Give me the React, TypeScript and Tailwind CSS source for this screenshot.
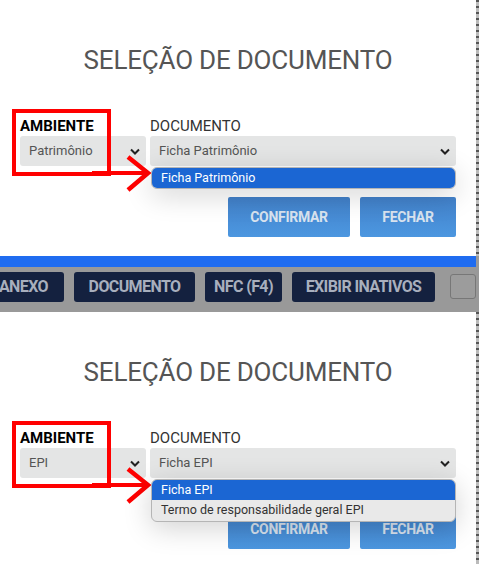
import React from 'react'

const font = { fontFamily: 'Roboto, "Noto Sans", sans-serif' }

function Chevron() {
  return (
    <svg width="10" height="7" viewBox="0 0 10 7" className="shrink-0">
      <path d="M1 1.5 L5 5.5 L9 1.5" fill="none" stroke="#222" strokeWidth="2" />
    </svg>
  )
}

function Select({ value }: { value: string }) {
  return (
    <div className="h-[30px] bg-[#e4e5e5] rounded-[3px] flex items-center justify-between pl-[9px] pr-[6px]">
      <span className="text-[13px] text-[#555]">{value}</span>
      <Chevron />
    </div>
  )
}

function Annotation() {
  return (
    <>
      {/* red box */}
      <div className="absolute left-[12px] top-[109px] w-[99px] h-[67px] border-[4px] border-[#ff0000] pointer-events-none" />
      {/* arrow */}
      <svg className="absolute left-[90px] top-[154px] pointer-events-none" width="62" height="42" viewBox="0 0 62 42">
        <path d="M2 19 L57 19" stroke="#ff0000" strokeWidth="4" fill="none" />
        <path d="M38 3 L58 19 L38 36" stroke="#ff0000" strokeWidth="4.5" fill="none" strokeLinejoin="miter" />
      </svg>
    </>
  )
}

function Panel({
  ambiente,
  documento,
  options,
}: {
  ambiente: string
  documento: string
  options: string[]
}) {
  return (
    <div className="relative bg-white pt-[44px] px-[20px]">
      <h1 className="text-center text-[26px] leading-[32px] text-[#555] tracking-[-0.2px]">SELEÇÃO DE DOCUMENTO</h1>
      <div className="grid grid-cols-[126px_1fr] gap-x-[4px] mt-[41px]">
        <div className="text-[15px] leading-[18px] font-bold text-black">AMBIENTE</div>
        <div className="text-[15px] leading-[18px] text-[#333]">DOCUMENTO</div>
        <div className="mt-[1px]">
          <Select value={ambiente} />
        </div>
        <div className="mt-[1px] relative">
          <Select value={documento} />
          <div className="absolute left-[1px] right-0 top-[31px] z-10 rounded-[6px] overflow-hidden bg-[#e9e9e9] border border-[#b5b5b5] shadow-[0_6px_28px_rgba(0,0,0,0.18)]">
            {options.map((o, i) => (
              <div
                key={o}
                className={
                  i === 0
                    ? 'h-[20px] flex items-center pl-[9px] text-[12.5px] text-white bg-[#1b66d3]'
                    : 'h-[21px] flex items-center pl-[9px] text-[12.5px] text-[#333]'
                }
              >
                {o}
              </div>
            ))}
          </div>
        </div>
      </div>
      <div className="flex justify-end gap-[10px] mt-[31px] pb-[19px]">
        <button className="w-[122px] h-[40px] rounded-[2px] bg-gradient-to-b from-[#4281ca] to-[#4c97e0] text-[#d9e3ef] text-[14px] font-bold tracking-[-0.3px]">
          CONFIRMAR
        </button>
        <button className="w-[96px] h-[40px] rounded-[2px] bg-gradient-to-b from-[#4281ca] to-[#4c97e0] text-[#d9e3ef] text-[14px] font-bold tracking-[-0.3px]">
          FECHAR
        </button>
      </div>
      <Annotation />
    </div>
  )
}

function ToolButton({ label, className }: { label: string; className: string }) {
  return (
    <div
      className={
        'h-[30px] bg-[#14213f] rounded-[3px] flex items-center text-[16px] font-bold text-[#a8afbd] tracking-[-0.6px] ' +
        className
      }
    >
      {label}
    </div>
  )
}

export default function App() {
  return (
    <div className="w-[479px] h-[564px] overflow-hidden flex bg-white" style={font}>
      <div className="flex-1 flex flex-col">
        <div className="h-[256px] overflow-hidden">
          <Panel ambiente="Patrimônio" documento="Ficha Patrimônio" options={['Ficha Patrimônio']} />
        </div>
        <div className="h-[11px] bg-[#1f6cf0]" />
        <div className="h-[45px] bg-[#999] flex items-center gap-[10px] -ml-[10px] pb-[6px]">
          <ToolButton label="ANEXO" className="w-[74px] justify-end pr-[16px]" />
          <ToolButton label="DOCUMENTO" className="w-[121px] justify-center" />
          <ToolButton label="NFC (F4)" className="w-[77px] justify-center" />
          <ToolButton label="EXIBIR INATIVOS" className="w-[143px] justify-center" />
          <div className="ml-[5px] w-[26px] h-[25px] rounded-[3px] border border-[#777] bg-[#9c9c9c]" />
        </div>
        <div className="flex-1 overflow-hidden">
          <Panel
            ambiente="EPI"
            documento="Ficha EPI"
            options={['Ficha EPI', 'Termo de responsabilidade geral EPI']}
          />
        </div>
      </div>
      <div className="w-[3px] flex flex-col">
        <div className="h-[256px] bg-[repeating-linear-gradient(180deg,#555_0px,#555_2px,#bbb_2px,#bbb_6px)]" />
        <div className="h-[56px] bg-[#999]" />
        <div className="flex-1 bg-[repeating-linear-gradient(180deg,#555_0px,#555_2px,#bbb_2px,#bbb_6px)]" />
      </div>
    </div>
  )
}
